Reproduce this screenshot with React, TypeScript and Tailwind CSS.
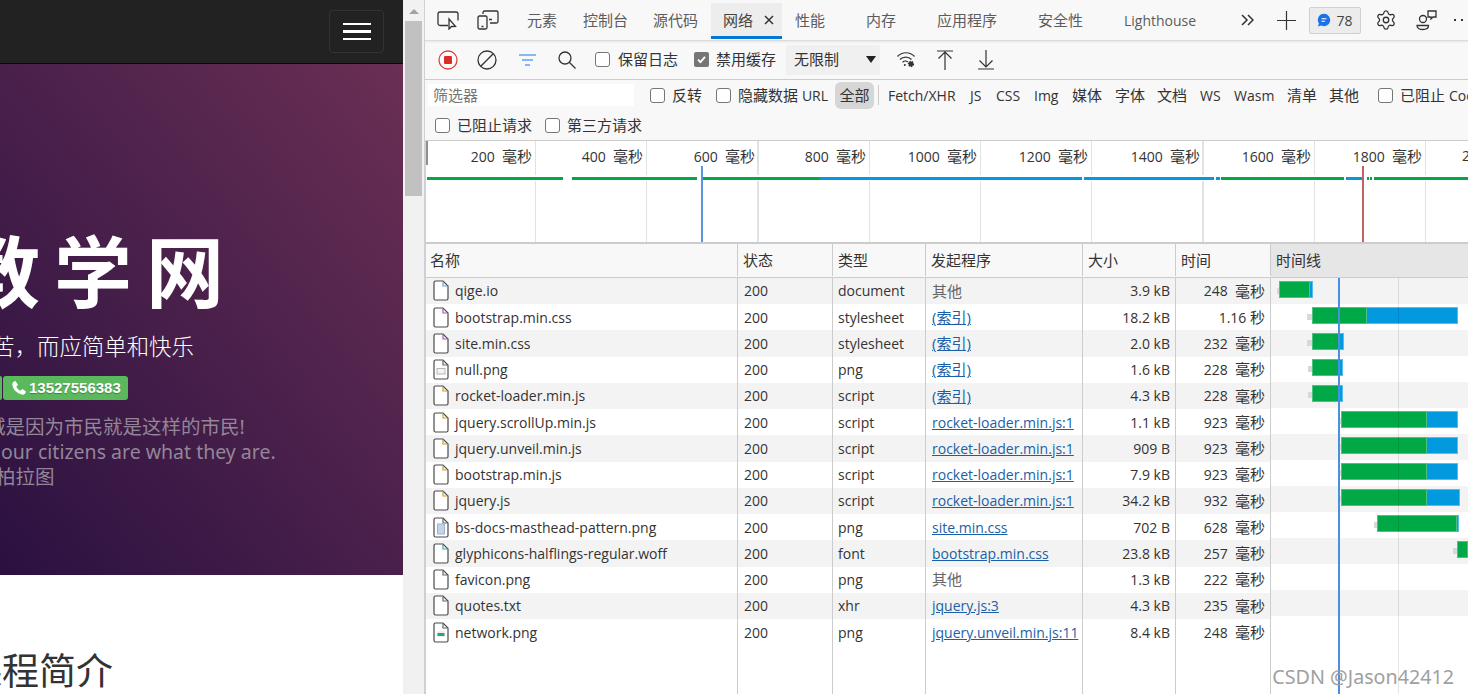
import React from "react";
import { Settings } from "lucide-react";

const CJK = "font-['Open_Sans','Noto_Sans_CJK_SC',sans-serif]";
const COLS = "grid-cols-[313px_95px_93px_157px_93px_95px]";

type Row = {
  name: string;
  kind: string;
  type: string;
  init: string;
  link: boolean;
  size: string;
  num: string;
  unit: string;
};

const rows: Row[] = [
  { name: "qige.io", kind: "doc", type: "document", init: "其他", link: false, size: "3.9 kB", num: "248  ", unit: "毫秒" },
  { name: "bootstrap.min.css", kind: "css", type: "stylesheet", init: "(索引)", link: true, size: "18.2 kB", num: "1.16 ", unit: "秒" },
  { name: "site.min.css", kind: "css", type: "stylesheet", init: "(索引)", link: true, size: "2.0 kB", num: "232  ", unit: "毫秒" },
  { name: "null.png", kind: "img", type: "png", init: "(索引)", link: true, size: "1.6 kB", num: "228  ", unit: "毫秒" },
  { name: "rocket-loader.min.js", kind: "js", type: "script", init: "(索引)", link: true, size: "4.3 kB", num: "228  ", unit: "毫秒" },
  { name: "jquery.scrollUp.min.js", kind: "js", type: "script", init: "rocket-loader.min.js:1", link: true, size: "1.1 kB", num: "923  ", unit: "毫秒" },
  { name: "jquery.unveil.min.js", kind: "js", type: "script", init: "rocket-loader.min.js:1", link: true, size: "909 B", num: "923  ", unit: "毫秒" },
  { name: "bootstrap.min.js", kind: "js", type: "script", init: "rocket-loader.min.js:1", link: true, size: "7.9 kB", num: "923  ", unit: "毫秒" },
  { name: "jquery.js", kind: "js", type: "script", init: "rocket-loader.min.js:1", link: true, size: "34.2 kB", num: "932  ", unit: "毫秒" },
  { name: "bs-docs-masthead-pattern.png", kind: "pat", type: "png", init: "site.min.css", link: true, size: "702 B", num: "628  ", unit: "毫秒" },
  { name: "glyphicons-halflings-regular.woff", kind: "font", type: "font", init: "bootstrap.min.css", link: true, size: "23.8 kB", num: "257  ", unit: "毫秒" },
  { name: "favicon.png", kind: "plain", type: "png", init: "其他", link: false, size: "1.3 kB", num: "222  ", unit: "毫秒" },
  { name: "quotes.txt", kind: "plain", type: "xhr", init: "jquery.js:3", link: true, size: "4.3 kB", num: "235  ", unit: "毫秒" },
  { name: "network.png", kind: "net", type: "png", init: "jquery.unveil.min.js:11", link: true, size: "8.4 kB", num: "248  ", unit: "毫秒" },
];

// [stub start, green start, green end, blue end] in px from the left of the waterfall column (x=1271)
const bars: (number[] | null)[] = [
  [6, 8, 39, 42],
  [36, 41, 96, 187],
  [36, 41, 68, 73],
  [37, 41, 68, 72],
  [37, 41, 68, 72],
  [67, 70, 156, 187],
  [67, 70, 156, 187],
  [67, 70, 156, 187],
  [67, 70, 156, 189],
  [103, 106, 186, 188],
  [182, 186, 197, 197],
  null,
  null,
  null,
];

const ticks = [
  { x: 110, line: 110, label: "200" },
  { x: 221, line: 221, label: "400" },
  { x: 333, line: 332, label: "600", thick: true },
  { x: 444, line: 444, label: "800" },
  { x: 555, line: 555, label: "1000" },
  { x: 666, line: 666, label: "1200" },
  { x: 778, line: 777, label: "1400", thick: true },
  { x: 889, line: 889, label: "1600" },
  { x: 1000, line: 1000, label: "1800" },
];

const overview = [
  { l: 2, r: 138, c: "bg-[#00a846]" },
  { l: 147, r: 272, c: "bg-[#00a846]" },
  { l: 277, r: 394, c: "bg-[#00a846]" },
  { l: 394, r: 657, c: "bg-[#0299de]" },
  { l: 659, r: 789, c: "bg-[#0299de]" },
  { l: 791, r: 795, c: "bg-[#0299de]" },
  { l: 796, r: 919, c: "bg-[#00a846]" },
  { l: 921, r: 937, c: "bg-[#0299de]" },
  { l: 942, r: 944, c: "bg-[#00a846]" },
  { l: 945, r: 947, c: "bg-[#00a846]" },
  { l: 949, r: 1043, c: "bg-[#00a846]" },
];

function Z({ children }: { children: React.ReactNode }) {
  return <span className="text-[15px]">{children}</span>;
}

function FileIcon({ kind }: { kind: string }) {
  const accent =
    kind === "css"
      ? "#9b5fc0"
      : kind === "js"
        ? "#c9a227"
        : kind === "font"
          ? "#3aa7a7"
          : kind === "doc"
            ? "#6f9ce0"
            : "#666666";
  return (
    <svg width="16" height="21" viewBox="0 0 16 21" className="shrink-0">
      <path
        d="M2.500 1h7.500l5 5v12.500a1.500 1.500 0 0 1-1.500 1.500H2.500A1.500 1.500 0 0 1 1 18.500v-16A1.500 1.500 0 0 1 2.500 1z"
        fill="#ffffff"
        stroke="#4a4a4a"
        strokeWidth="1.200"
      />
      <path d="M10 1.500v4.500h4.500" fill="none" stroke={accent} strokeWidth="1.200" />
      {kind === "img" && <rect x="4" y="9.500" width="8" height="5.500" fill="#f4f4f4" stroke="#b5b5b5" />}
      {kind === "pat" && <rect x="4.500" y="7" width="7" height="10" fill="#c3d3ec" stroke="#9fb2cf" />}
      {kind === "net" && (
        <>
          <rect x="4" y="9" width="8" height="6" fill="#f0f0f0" />
          <rect x="4.500" y="11" width="7" height="3" fill="#24a871" />
        </>
      )}
    </svg>
  );
}

function Check({
  label,
  checked = false,
  className = "",
  gap = "gap-[7px]",
}: {
  label: React.ReactNode;
  checked?: boolean;
  className?: string;
  gap?: string;
}) {
  return (
    <div className={`flex shrink-0 items-center whitespace-nowrap ${gap} ${className}`}>
      {checked ? (
        <span className="flex h-[15px] w-[15px] shrink-0 items-center justify-center rounded-[2px] bg-[#767676]">
          <svg width="11" height="11" viewBox="0 0 11 11">
            <path d="M2 5.700 4.400 8.200 9 2.800" fill="none" stroke="#ffffff" strokeWidth="1.800" />
          </svg>
        </span>
      ) : (
        <span className="h-[15px] w-[15px] shrink-0 rounded-[3px] border border-[#767676] bg-white" />
      )}
      <span className="text-[15px]">{label}</span>
    </div>
  );
}

function Tab({ label, className }: { label: string; className: string }) {
  return <div className={`flex h-full shrink-0 items-center whitespace-nowrap text-[#5c5c5c] ${className}`}>{label}</div>;
}

function F({ w, children }: { w: string; children: React.ReactNode }) {
  return <span className={`shrink-0 ${w}`}>{children}</span>;
}

export default function App() {
  return (
    <div className={`flex h-[694px] w-[1468px] overflow-hidden bg-white text-[14px] text-[#333333] ${CJK}`}>
      {/* inspected page */}
      <div className="flex w-[403px] shrink-0 flex-col overflow-hidden">
        <div className="flex h-[64px] shrink-0 items-start justify-end border-b border-[#080808] bg-[#222222] pr-[19px] pt-[10px]">
          <div className="flex h-[43px] w-[55px] flex-col items-center justify-center gap-[5px] rounded-[4px] border border-[#333333]">
            <span className="h-[2px] w-[28px] bg-white" />
            <span className="h-[3px] w-[28px] bg-white" />
            <span className="h-[2px] w-[28px] bg-white" />
          </div>
        </div>
        <div className="flex h-[511px] shrink-0 flex-col overflow-hidden bg-gradient-to-tr from-[#2b1040] to-[#6b2f54] pt-[154px] text-white">
          <div className="-ml-[38px] whitespace-nowrap text-[78px] font-bold leading-[100px] tracking-[14px] font-['Noto_Sans_CJK_SC',sans-serif]">
            教学网
          </div>
          <div className="-ml-[142px] mt-[11px] whitespace-nowrap text-[22.4px] font-light leading-[32px] font-['Noto_Sans_CJK_SC',sans-serif]">
            学习不应该痛苦，而应简单和快乐
          </div>
          <div className="mt-[15px] flex h-[24px] items-center">
            <span className="h-full w-[2px] rounded-r-[3px] bg-[#5cb85c]" />
            <span className="ml-[1px] flex h-full w-[125px] items-center gap-[2px] rounded-[3px] bg-[#5cb85c] pl-[8px] text-[15px] font-bold [text-shadow:0_1px_1px_rgba(0,0,0,0.3)] font-['Liberation_Sans',sans-serif]">
              <svg width="16" height="16" viewBox="0 0 24 24" fill="#ffffff">
                <path d="M6.600 1.500 10.500 7 8 10c1 2.400 3.400 5 6 6l3-2.500 5.500 3.900c-.6 3-2.500 5-4.800 4.600C9.500 20.900 3 14.500 2 7 1.700 4.500 3.800 2.100 6.600 1.500z" />
              </svg>
              13527556383
            </span>
          </div>
          <div className="mt-[14px] whitespace-nowrap text-[19.5px] leading-[25px] text-[#938698] font-['Noto_Sans',Noto_Sans_CJK_SC,sans-serif]">
            <div className="-ml-[14px]">城是因为市民就是这样的市民!</div>
            <div className="ml-[1px]">our citizens are what they are.</div>
            <div className="-ml-[4px]">柏拉图</div>
          </div>
        </div>
        <div className="-ml-[35px] mt-[69px] whitespace-nowrap text-[37px] leading-[50px] text-[#333333] font-['Noto_Sans_CJK_SC',sans-serif]">
          课程简介
        </div>
      </div>

      {/* page scrollbar */}
      <div className="flex w-[21px] shrink-0 flex-col items-center bg-[#f1f1f1] pt-[9px]">
        <span className="h-0 w-0 border-x-[5px] border-b-[5px] border-x-transparent border-b-[#a3a3a3]" />
        <span className="mt-[7px] h-[175px] w-[17px] bg-[#c1c1c1]" />
      </div>
      <div className="w-[1px] shrink-0 bg-[#cdd0d5]" />

      {/* devtools */}
      <div className="relative flex min-w-0 flex-1 flex-col overflow-hidden bg-[#f8f8f8] text-[#333333]">
        <span className="absolute bottom-0 left-0 top-[140px] z-10 w-[1px] bg-[#cdd0d5]" />
        {/* tabs */}
        <div className="flex h-[41px] shrink-0 items-center border-b border-[#dcdcdc] text-[15px] shadow-[0_1px_2px_rgba(0,0,0,0.08)]">
          <svg width="22" height="19" viewBox="0 0 22 19" className="ml-[12px] shrink-0" fill="none" stroke="#333333" strokeWidth="1.300">
            <path d="M11 14.500H3a2 2 0 0 1-2-2V3a2 2 0 0 1 2-2h16a2 2 0 0 1 2 2v6.500" />
            <path d="M12 8v10l2.500-2.500 4-.2z" />
          </svg>
          <svg width="22" height="20" viewBox="0 0 22 20" className="ml-[18px] shrink-0" fill="none" stroke="#333333" strokeWidth="1.300">
            <path d="M6 4V2.500A1.500 1.500 0 0 1 7.500 1h12A1.500 1.500 0 0 1 21 2.500v9a1.500 1.500 0 0 1-1.500 1.500H13" />
            <rect x="1" y="6" width="9" height="13" rx="1.500" />
            <path d="M4.500 16.500h2M12 9.500h3" />
          </svg>
          <Tab label="元素" className="ml-[28px] w-[56px]" />
          <Tab label="控制台" className="w-[70px]" />
          <Tab label="源代码" className="w-[58px]" />
          <div className="relative mt-[3px] flex h-[36px] w-[71px] shrink-0 items-center self-start bg-[#ededed] pb-[2px] pl-[12px] text-[#444444]">
            网络
            <svg width="10" height="10" viewBox="0 0 10 10" className="ml-[11px] shrink-0" stroke="#333333" strokeWidth="1.500">
              <path d="M1 1l8 8M9 1l-8 8" />
            </svg>
            <span className="absolute bottom-0 left-0 h-[3px] w-full bg-[#0078d4]" />
          </div>
          <Tab label="性能" className="ml-[13px] w-[71px]" />
          <Tab label="内存" className="w-[71px]" />
          <Tab label="应用程序" className="w-[101px]" />
          <Tab label="安全性" className="w-[86px]" />
          <div className="flex h-full w-[109px] shrink-0 items-center text-[14px] text-[#5c5c5c]">Lighthouse</div>
          <svg width="13" height="12" viewBox="0 0 13 12" className="ml-[8px] shrink-0" fill="none" stroke="#333333" strokeWidth="1.500">
            <path d="M1 1l5 5-5 5M7 1l5 5-5 5" />
          </svg>
          <svg width="19" height="19" viewBox="0 0 19 19" className="ml-[23px] shrink-0" stroke="#333333" strokeWidth="1.200">
            <path d="M9.500 0v19M0 9.500h19" />
          </svg>
          <div className="ml-[13px] flex h-[27px] w-[52px] shrink-0 items-center justify-center gap-[5px] rounded-[2px] border border-[#d0d0d0] bg-[#ececec] text-[14px] text-[#444444]">
            <svg width="14" height="14" viewBox="0 0 14 14" className="shrink-0">
              <path d="M7 .8a6.200 6.200 0 1 1-2.700 11.800L1 13.500l.9-3.100A6.200 6.200 0 0 1 7 .8z" fill="#1a73e8" />
              <path d="M4.500 5.800h5M4.500 8.200h3.500" stroke="#ffffff" strokeWidth="1.100" />
            </svg>
            78
          </div>
          <Settings size={22} strokeWidth={1.400} color="#333333" className="ml-[14px] shrink-0" />
          <svg width="22" height="22" viewBox="0 0 22 22" className="ml-[19px] shrink-0" fill="none" stroke="#333333" strokeWidth="1.300">
            <circle cx="7" cy="10" r="3.500" />
            <path d="M1 16.500h11.500c0 2.500-2.500 4-5.700 4S1 19 1 16.500z" />
            <path d="M12 2h8v6h-3l-2 2V8h-3z" />
          </svg>
          <div className="ml-[16px] flex shrink-0 gap-[5px]">
            <span className="h-[2px] w-[2px] bg-[#333333]" />
            <span className="h-[2px] w-[2px] bg-[#333333]" />
          </div>
        </div>

        {/* toolbar */}
        <div className="flex h-[39px] shrink-0 items-center border-b border-[#cccccc] pb-[1px]">
          <svg width="20" height="20" viewBox="0 0 20 20" className="ml-[13px] shrink-0">
            <circle cx="10" cy="10" r="9" fill="#ffffff" stroke="#e3403a" strokeWidth="1.300" />
            <rect x="6" y="6" width="8" height="8" rx="1" fill="#dd2c26" />
          </svg>
          <svg width="20" height="20" viewBox="0 0 20 20" className="ml-[19px] shrink-0" fill="none" stroke="#333333" strokeWidth="1.300">
            <circle cx="10" cy="10" r="9" />
            <path d="M3.800 16.200 16.200 3.800" />
          </svg>
          <svg width="17" height="12" viewBox="0 0 17 12" className="ml-[22px] shrink-0" stroke="#1a73e8" strokeWidth="1.200">
            <path d="M0 1h17M3 6h11M6 11h5" />
          </svg>
          <svg width="18" height="18" viewBox="0 0 18 18" className="ml-[22px] shrink-0" fill="none" stroke="#333333" strokeWidth="1.300">
            <circle cx="7" cy="7" r="6" />
            <path d="M11.500 11.500 17.500 17.500" />
          </svg>
          <Check label="保留日志" gap="gap-[8px]" className="ml-[19px] w-[99px]" />
          <Check label="禁用缓存" checked className="w-[92px]" />
          <div className="flex h-[30px] w-[94px] shrink-0 items-center justify-between rounded-[2px] bg-[#f0f0f0] pl-[8px] pr-[4px] text-[15px]">
            无限制
            <span className="h-0 w-0 border-x-[5px] border-t-[7px] border-x-transparent border-t-[#222222]" />
          </div>
          <svg width="19" height="17" viewBox="0 0 19 17" className="ml-[17px] shrink-0" fill="none" stroke="#333333" strokeWidth="1.200">
            <path d="M.500 5.500c4.500-5 12.500-5 17 0M3 8.500c3-3.200 8.500-3.200 11.500 0M5.500 11.300c1.500-1.500 4-1.500 5.500-.3" />
            <circle cx="7.800" cy="14" r="1" fill="#333333" stroke="none" />
            <circle cx="14" cy="13" r="2.400" fill="#333333" stroke="#333333" strokeWidth="1.500" strokeDasharray="1.200 1" />
          </svg>
          <svg width="16" height="20" viewBox="0 0 16 20" className="ml-[21px] shrink-0" fill="none" stroke="#333333" strokeWidth="1.200">
            <path d="M0 1h16M8 20V2M1.500 8.500 8 2l6.500 6.500" />
          </svg>
          <svg width="16" height="20" viewBox="0 0 16 20" className="ml-[25px] shrink-0" fill="none" stroke="#333333" strokeWidth="1.200">
            <path d="M0 19h16M8 0v17M1.500 10.500 8 17l6.500-6.500" />
          </svg>
        </div>

        {/* filter */}
        <div className="flex h-[60px] shrink-0 flex-col">
          <div className="flex h-[30px] shrink-0 items-center whitespace-nowrap pl-[3px]">
            <div className="flex h-[22px] w-[206px] shrink-0 items-center bg-white pl-[5px] text-[15px] text-[#757575]">筛选器</div>
            <Check label="反转" className="ml-[16px] w-[66px]" />
            <Check label={<>隐藏数据 <span className="text-[14px]">URL</span></>} className="w-[119px]" />
            <div className="flex h-[27px] w-[39px] shrink-0 items-center justify-center rounded-[6px] bg-[#d6d6d6] text-[15px]">全部</div>
            <span className="ml-[4px] h-[20px] w-[1px] shrink-0 bg-[#cccccc]" />
            <F w="ml-[9px] w-[82px]">Fetch/XHR</F>
            <F w="w-[26px]">JS</F>
            <F w="w-[38px]">CSS</F>
            <F w="w-[38px]">Img</F>
            <F w="w-[43px]"><Z>媒体</Z></F>
            <F w="w-[42px]"><Z>字体</Z></F>
            <F w="w-[43px]"><Z>文档</Z></F>
            <F w="w-[34px]">WS</F>
            <F w="w-[53px]">Wasm</F>
            <F w="w-[42px]"><Z>清单</Z></F>
            <F w="w-[49px]"><Z>其他</Z></F>
            <Check label={<>已阻止 <span className="text-[14px]">Cookie</span></>} />
          </div>
          <div className="flex flex-1 items-center pl-[10px]">
            <Check label="已阻止请求" className="w-[110px]" />
            <Check label="第三方请求" />
          </div>
        </div>

        {/* overview */}
        <div className="relative h-[104px] shrink-0 overflow-hidden border-b-2 border-t border-b-[#cccccc] border-t-[#cccccc] bg-white">
          <span className="absolute left-0 top-0 h-[24px] w-[3px] bg-[#8f8f8f]" />
          {ticks.map((t) => (
            <React.Fragment key={t.label}>
              <span className={`absolute bottom-0 top-0 bg-[#e2e2e2] ${t.thick ? "w-[2px]" : "w-[1px]"}`} style={{ left: t.line }} />
              <span className="absolute top-[5px] whitespace-pre leading-[20px] text-[#333333]" style={{ right: 1043 - t.x + 3 }}>
                {t.label + "  "}
                <Z>毫秒</Z>
              </span>
            </React.Fragment>
          ))}
          <span className="absolute left-[1037px] top-[5px] leading-[20px]">2</span>
          <div className="absolute left-0 right-0 top-[34px] h-[6px] bg-white" />
          {overview.map((s, i) => (
            <span key={i} className={`absolute top-[36px] h-[3px] ${s.c}`} style={{ left: s.l, width: s.r - s.l }} />
          ))}
          <span className="absolute bottom-0 left-[276px] top-[25px] w-[2px] bg-[#5b93e0]" />
          <span className="absolute bottom-0 left-[937px] top-[25px] w-[2px] bg-[#c4625f]" />
        </div>

        {/* table */}
        <div className="flex min-h-0 flex-1 overflow-hidden bg-white">
          <div className="flex w-[846px] shrink-0 flex-col">
            <div className={`grid h-[33.75px] shrink-0 border-b border-[#cccccc] bg-[#f8f8f8] pb-[1px] text-[15px] ${COLS}`}>
              {["名称", "状态", "类型", "发起程序", "大小", "时间"].map((h) => (
                <div key={h} className="flex items-center border-r border-[#cccccc] pl-[5px]">
                  {h}
                </div>
              ))}
            </div>
            {rows.map((r, i) => (
              <div
                key={r.name}
                className={`grid h-[26.25px] shrink-0 items-stretch whitespace-nowrap ${COLS} ${
                  i % 2 === 0 ? "bg-[#f3f3f3]" : "bg-white"
                }`}
              >
                <div className="flex items-center gap-[6px] overflow-hidden border-r border-[#cccccc] pl-[8px]">
                  <FileIcon kind={r.kind} />
                  <span>{r.name}</span>
                </div>
                <div className="flex items-center border-r border-[#cccccc] pl-[6px]">200</div>
                <div className="flex items-center border-r border-[#cccccc] pl-[5px]">{r.type}</div>
                <div className="flex items-center border-r border-[#cccccc] pl-[6px]">
                  {r.link ? (
                    <span className={`text-[#1a5fa8] underline ${r.init === "(索引)" ? "text-[15px]" : ""}`}>{r.init}</span>
                  ) : (
                    <span className="text-[15px] text-[#666666]">{r.init}</span>
                  )}
                </div>
                <div className="flex items-center justify-end border-r border-[#cccccc] pr-[5px]">{r.size}</div>
                <div className="flex items-center justify-end whitespace-pre border-r border-[#cccccc] pr-[5px]">
                  {r.num}
                  <Z>{r.unit}</Z>
                </div>
              </div>
            ))}
            <div className={`grid flex-1 ${COLS}`}>
              {[0, 1, 2, 3, 4, 5].map((k) => (
                <div key={k} className="border-r border-[#cccccc]" />
              ))}
            </div>
          </div>

          {/* waterfall */}
          <div className="flex min-w-0 flex-1 flex-col">
            <div className="flex h-[34px] shrink-0 items-center border-b border-[#cccccc] bg-[#e6e6e6] pb-[1px] pl-[5px] text-[15px]">时间线</div>
            <div className="relative flex-1">
              {bars.map((b, i) => (
                <div key={i} className={`relative h-[26px] ${i % 2 === 0 ? "bg-[#f3f3f3]" : "bg-white"}`}>
                  {b && (
                    <>
                      <span className="absolute top-[10px] h-[6px] bg-[#d8d8d8]" style={{ left: b[0], width: b[1] - b[0] }} />
                      <span className="absolute top-[3px] h-[17px] border border-[#4cc181] bg-[#00a846]" style={{ left: b[1], width: b[2] - b[1] }} />
                      {b[3] > b[2] && (
                        <span className="absolute top-[3px] h-[17px] border border-l-0 border-[#56bdf0] bg-[#0299de]" style={{ left: b[2], width: b[3] - b[2] }} />
                      )}
                    </>
                  )}
                </div>
              ))}
              <span className="absolute bottom-0 left-[67px] top-0 w-[2px] bg-[#4a90e2]" />
              <span className="absolute bottom-0 left-[127px] top-0 w-[1px] bg-black/10" />
              <span className="absolute bottom-[5px] right-[14px] whitespace-nowrap text-[19.7px] leading-[24px] text-[#a0a0a0] font-['Noto_Sans',sans-serif]">
                CSDN @Jason42412
              </span>
            </div>
          </div>
        </div>
      </div>
    </div>
  );
}
